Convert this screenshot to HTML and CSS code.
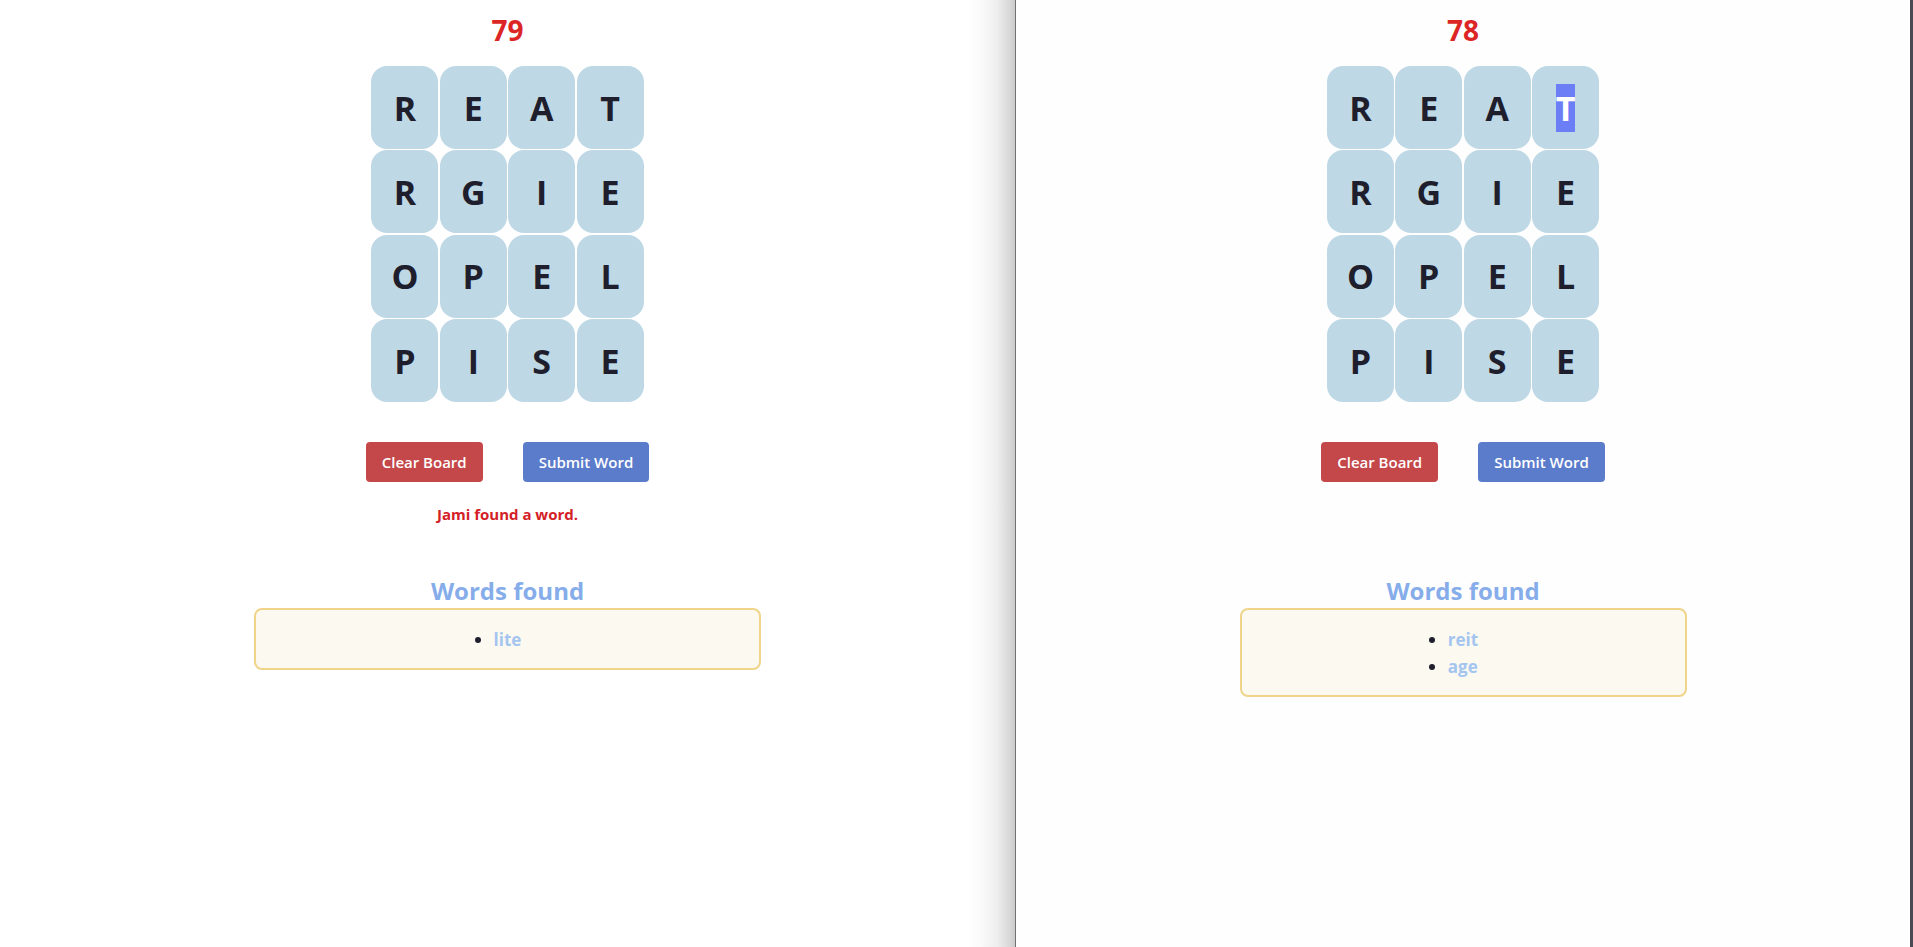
FILE: index.html
```html
<!DOCTYPE html>
<html lang="en">
<head>
<meta charset="utf-8">
<title>Word game</title>
<link rel="stylesheet" href="styles.css">
</head>
<body>
<div class="desk">
  <section class="pane pane-left">
    <div class="score">79</div>
    <div class="board">
      <div class="tile">R</div><div class="tile">E</div><div class="tile">A</div><div class="tile">T</div>
      <div class="tile">R</div><div class="tile">G</div><div class="tile">I</div><div class="tile">E</div>
      <div class="tile">O</div><div class="tile">P</div><div class="tile">E</div><div class="tile">L</div>
      <div class="tile">P</div><div class="tile">I</div><div class="tile">S</div><div class="tile">E</div>
    </div>
    <div class="actions">
      <button class="btn btn-clear">Clear Board</button>
      <button class="btn btn-submit">Submit Word</button>
    </div>
    <div class="message">Jami found a word.</div>
    <h2 class="found-title">Words found</h2>
    <div class="found-box">
      <ul class="found-list">
        <li>lite</li>
      </ul>
    </div>
  </section>
  <section class="pane pane-right">
    <div class="score">78</div>
    <div class="board">
      <div class="tile">R</div><div class="tile">E</div><div class="tile">A</div><div class="tile"><span class="sel">T</span></div>
      <div class="tile">R</div><div class="tile">G</div><div class="tile">I</div><div class="tile">E</div>
      <div class="tile">O</div><div class="tile">P</div><div class="tile">E</div><div class="tile">L</div>
      <div class="tile">P</div><div class="tile">I</div><div class="tile">S</div><div class="tile">E</div>
    </div>
    <div class="actions">
      <button class="btn btn-clear">Clear Board</button>
      <button class="btn btn-submit">Submit Word</button>
    </div>
    <div class="message"></div>
    <h2 class="found-title">Words found</h2>
    <div class="found-box">
      <ul class="found-list">
        <li>reit</li>
        <li>age</li>
      </ul>
    </div>
  </section>
</div>
</body>
</html>
```
FILE: styles.css
```css
html, body {
  margin: 0;
  padding: 0;
  height: 100%;
  background: #ffffff;
}

body {
  font-family: "Open Sans", "Noto Sans", sans-serif;
  color: #1e1e2d;
  overflow: hidden;
}

.desk {
  display: flex;
  height: 947px;
}

.pane {
  display: flex;
  flex-direction: column;
  align-items: center;
  box-sizing: border-box;
  height: 100%;
}

.pane-left {
  width: 1016px;
  flex: none;
  border-right: 1px solid #727272;
  background: linear-gradient(to right,
    #ffffff 0,
    #ffffff calc(100% - 48px),
    #fafafa calc(100% - 34px),
    #eeeeee calc(100% - 18px),
    #d9d9d9 calc(100% - 6px),
    #cbcbcb 100%);
}

.pane-right {
  flex: 1;
  background: #fefefe;
  border-right: 3px solid #4a4a55;
}

.score {
  margin-top: 6px;
  height: 48px;
  line-height: 48px;
  font-size: 28px;
  font-weight: 700;
  color: #dc2626;
}

.board {
  margin-top: 12px;
  display: grid;
  grid-template-columns: repeat(4, 67px);
  grid-auto-rows: 83px;
  gap: 1.4px 1.4px;
}

.tile {
  background: #bed8e6;
  border-radius: 16px;
  display: flex;
  align-items: center;
  justify-content: center;
  font-size: 34px;
  font-weight: 700;
  line-height: 48px;
  color: #1e1e2d;
}

.sel {
  background: #6c7ef6;
  color: #ffffff;
  line-height: 48px;
}

.actions {
  margin-top: 40px;
  display: flex;
  gap: 40px;
}

.btn {
  height: 40px;
  padding: 0 16px;
  border: none;
  border-radius: 4px;
  font-family: "Open Sans", "Noto Sans", sans-serif;
  font-size: 15px;
  font-weight: 600;
  color: #ffffff;
}

.btn-clear {
  background: #c4474a;
}

.btn-submit {
  background: #5b7bcb;
}

.message {
  margin-top: 20px;
  min-height: 24px;
  line-height: 24px;
  font-size: 15px;
  font-weight: 700;
  color: #d42027;
}

.found-title {
  margin: 50px 0 0;
  line-height: 30px;
  font-size: 24px;
  font-weight: 700;
  color: #86adea;
}

.found-box {
  width: 50%;
  margin-top: 2px;
  box-sizing: border-box;
  border: 2px solid #efd48a;
  border-radius: 8px;
  background: #fcf9f1;
  padding: 16px 0 15px;
}

.found-list {
  width: fit-content;
  margin: 0 auto;
  padding: 0;
  text-align: left;
}

.found-list li {
  line-height: 27px;
  font-size: 17px;
  font-weight: 700;
  color: #a4c5ef;
}

.found-list li::marker {
  color: #1e1e2d;
}
```
